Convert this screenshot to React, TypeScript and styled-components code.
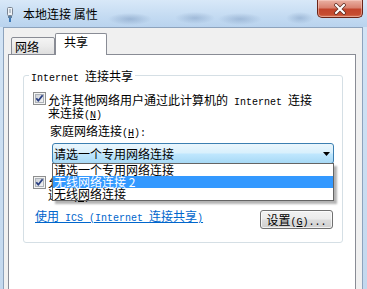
import React from 'react';
import styled, { createGlobalStyle } from 'styled-components';

const CJK = `"Noto Sans CJK SC", "Noto Sans", sans-serif`;

const Global = createGlobalStyle`
  html, body { margin: 0; padding: 0; width: 367px; height: 289px; overflow: hidden; background: #c6daef; }
  #root { width: 367px; height: 289px; }
  * { box-sizing: border-box; }
`;

const Window = styled.div`
  width: 367px;
  height: 289px;
  display: flex;
  flex-direction: column;
  background: linear-gradient(180deg, #d4e5f6 0%, #c3d8ee 100%);
  font-family: ${CJK};
  font-size: 12px;
  color: #000;
  overflow: hidden;
`;

const TitleBar = styled.div`
  height: 27px;
  flex: none;
  display: flex;
  align-items: flex-start;
  background:
    radial-gradient(ellipse 22px 6px at 130px 19px, rgba(110, 140, 180, 0.45), rgba(110, 140, 180, 0) 100%),
    radial-gradient(ellipse 20px 6px at 195px 18px, rgba(110, 140, 180, 0.4), rgba(110, 140, 180, 0) 100%),
    radial-gradient(ellipse 22px 6px at 240px 19px, rgba(110, 140, 180, 0.4), rgba(110, 140, 180, 0) 100%),
    radial-gradient(ellipse 14px 6px at 300px 18px, rgba(110, 140, 180, 0.4), rgba(110, 140, 180, 0) 100%),
    linear-gradient(180deg, #d8e8f8 0%, #c4dbf2 60%, #b9d3ee 100%);
`;

const TitleLeft = styled.div`
  display: flex;
  align-items: flex-start;
  gap: 9px;
  padding: 7px 0 0 6px;
`;

const TitleText = styled.span`
  line-height: 14px;
  font-size: 12px;
  color: #000;
`;

const CloseButton = styled.div`
  margin-left: auto;
  margin-right: 4px;
  width: 46px;
  height: 18px;
  border: 1px solid #6a2417;
  border-top: none;
  border-radius: 0 0 5px 5px;
  background: linear-gradient(180deg, #eab1a3 0%, #d98270 45%, #c2452c 55%, #c64d31 85%, #d77a5d 100%);
  box-shadow: inset 0 0 0 1px rgba(255, 220, 210, 0.45);
  display: flex;
  align-items: center;
  justify-content: center;
`;

const Client = styled.div`
  flex: 1;
  margin: 0 4px 0 3px;
  background: #f0f0f0;
  border: 1px solid #8da3bd;
  border-bottom: none;
  display: flex;
  flex-direction: column;
  padding: 5px 6px 0 4px;
  min-height: 0;
`;

const TabRow = styled.div`
  display: flex;
  align-items: flex-end;
  height: 22px;
  padding-left: 3px;
  margin-bottom: -1px;
  flex: none;
`;

const Tab = styled.div<{ $active?: boolean; $w: number; $pl: number }>`
  width: ${p => p.$w}px;
  height: ${p => (p.$active ? 22 : 18)}px;
  padding-left: ${p => p.$pl}px;
  padding-top: ${p => (p.$active ? 1 : 2)}px;
  line-height: 14px;
  border: 1px solid #898c95;
  border-bottom: ${p => (p.$active ? 'none' : '1px solid #898c95')};
  border-radius: 2px 2px 0 0;
  background: ${p => (p.$active ? '#ffffff' : 'linear-gradient(180deg, #f4f4f4 0%, #ebebeb 50%, #dedede 100%)')};
  position: ${p => (p.$active ? 'relative' : 'static')};
  z-index: ${p => (p.$active ? 1 : 0)};
`;

const Panel = styled.div`
  flex: 1;
  background: #fff;
  border: 1px solid #898c95;
  border-bottom: none;
  padding-left: 14px;
`;

const Group = styled.fieldset`
  margin: 14px 0 0 0;
  width: 320px;
  border: 1px solid #d5dfe5;
  border-radius: 3px;
  padding: 0;
  min-inline-size: 0;
`;

const Legend = styled.legend`
  margin-left: 5px;
  padding: 0 2px;
  line-height: 13px;
  height: 13px;
`;

const M = styled.span`
  font-family: "Liberation Mono", monospace;
  font-size: 10px;
  line-height: 0;
  white-space: pre;
`;

const GroupBody = styled.div`
  display: flex;
  flex-direction: column;
  padding: 11px 9px 13px 9px;
`;

const CheckRow = styled.div<{ $mt: number; $boxTop: number }>`
  display: flex;
  align-items: flex-start;
  margin-top: ${p => p.$mt}px;
  & > svg { margin-top: ${p => p.$boxTop}px; flex: none; }
`;

const CheckText = styled.div`
  margin-left: 2px;
  line-height: 13px;
  white-space: nowrap;
`;

const FieldLabel = styled.div`
  margin: 5px 0 0 17px;
  line-height: 13px;
`;

const Combo = styled.div`
  position: relative;
  margin: 6px 0 0 19px;
  width: 282px;
  height: 21px;
  border: 1px solid #3c7fb1;
  border-radius: 3px;
  background: linear-gradient(180deg, #eaf6fd 0%, #d9f0fc 45%, #bee6fd 55%, #a7d9f5 100%);
  display: flex;
  align-items: center;
  padding-left: 1px;
  padding-right: 3px;
  line-height: 14px;
`;

const ComboText = styled.span`
  flex: 1;
`;

const DropList = styled.div`
  position: absolute;
  left: -1px;
  top: 19px;
  width: 282px;
  background: #fff;
  border: 1px solid #646464;
  box-shadow: 3px 3px 2px rgba(0, 0, 0, 0.3);
  z-index: 5;
`;

const DropItem = styled.div<{ $sel?: boolean }>`
  height: 12px;
  line-height: 12px;
  padding-left: 1px;
  background: ${p => (p.$sel ? '#3399ff' : 'transparent')};
  color: ${p => (p.$sel ? '#fff' : '#000')};
  white-space: nowrap;
`;

const BottomRow = styled.div`
  display: flex;
  align-items: flex-start;
  margin-top: 8px;
  height: 20px;
`;

const Link = styled.a`
  margin-left: 2px;
  line-height: 13px;
  color: #0066cc;
  text-decoration: underline;
  cursor: pointer;
`;

const Button = styled.button`
  margin-left: auto;
  margin-top: 1px;
  width: 73px;
  height: 19px;
  padding: 0;
  border: 1px solid #707070;
  border-radius: 3px;
  background: linear-gradient(180deg, #f2f2f2 0%, #ebebeb 48%, #dddddd 52%, #cfcfcf 100%);
  box-shadow: inset 0 0 0 1px rgba(255, 255, 255, 0.7);
  font-family: ${CJK};
  font-size: 12px;
  line-height: 15px;
  color: #000;
`;

const CheckBox = () => (
  <svg width="13" height="13" viewBox="0 0 13 13">
    <defs>
      <linearGradient id="cbg" x1="0" y1="0" x2="1" y2="1">
        <stop offset="0" stopColor="#cbcfd5" />
        <stop offset="1" stopColor="#f6f6f6" />
      </linearGradient>
    </defs>
    <rect x="0.5" y="0.5" width="12" height="12" fill="#f4f4f4" stroke="#8e8f8f" />
    <rect x="2.5" y="2.5" width="8" height="8" fill="url(#cbg)" stroke="#aeb3b9" />
    <path d="M3.3 6.2 L5.3 8.8 L9.6 3.2" fill="none" stroke="#2a3f82" strokeWidth="1.8" strokeLinejoin="round" />
  </svg>
);

const TitleIcon = () => (
  <svg width="8" height="15" viewBox="0 0 8 15">
    <rect x="1.5" y="0.5" width="5" height="8" rx="1" fill="#eef2f6" stroke="#7a8593" />
    <rect x="3" y="2" width="2" height="4" fill="#b8c2cc" />
    <rect x="2" y="9" width="4" height="2" fill="#5f7f9f" />
    <rect x="3" y="11" width="2" height="4" fill="#3d78b5" />
  </svg>
);

const CloseX = () => (
  <svg width="14" height="12" viewBox="0 0 14 12">
    <path d="M3 2 L11 10 M11 2 L3 10" stroke="#5a2a20" strokeWidth="3.6" strokeLinecap="round" />
    <path d="M3 2 L11 10 M11 2 L3 10" stroke="#ffffff" strokeWidth="2.2" strokeLinecap="round" />
  </svg>
);

const Arrow = () => (
  <svg width="7" height="4" viewBox="0 0 7 4">
    <path d="M0 0 H7 L3.5 4 Z" fill="#000" />
  </svg>
);

export default function App() {
  return (
    <>
      <Global />
      <Window>
        <TitleBar>
          <TitleLeft>
            <TitleIcon />
            <TitleText>本地连接 属性</TitleText>
          </TitleLeft>
          <CloseButton>
            <CloseX />
          </CloseButton>
        </TitleBar>
        <Client>
          <TabRow>
            <Tab $w={44} $pl={3}>网络</Tab>
            <Tab $active $w={52} $pl={8}>共享</Tab>
          </TabRow>
          <Panel>
            <Group>
              <Legend>
                <M>Internet </M>连接共享
              </Legend>
              <GroupBody>
                <CheckRow $mt={0} $boxTop={-1}>
                  <CheckBox />
                  <CheckText>
                    允许其他网络用户通过此计算机的<M> Internet </M>连接
                    <br />
                    来连接<M>(<u>N</u>)</M>
                  </CheckText>
                </CheckRow>
                <FieldLabel>
                  家庭网络连接<M>(<u>H</u>):</M>
                </FieldLabel>
                <Combo>
                  <ComboText>请选一个专用网络连接</ComboText>
                  <Arrow />
                  <DropList>
                    <DropItem>请选一个专用网络连接</DropItem>
                    <DropItem $sel>无线网络连接 2</DropItem>
                    <DropItem>无线网络连接</DropItem>
                  </DropList>
                </Combo>
                <CheckRow $mt={11} $boxTop={1}>
                  <CheckBox />
                  <CheckText>
                    允许其他网络用户控制或禁用共享的<M> Internet</M>
                    <br />
                    连接<M>(<u>O</u>)</M>
                  </CheckText>
                </CheckRow>
                <BottomRow>
                  <Link>
                    使用<M> ICS (Internet </M>连接共享<M>)</M>
                  </Link>
                  <Button>
                    设置<M>(<u>G</u>)...</M>
                  </Button>
                </BottomRow>
              </GroupBody>
            </Group>
          </Panel>
        </Client>
      </Window>
    </>
  );
}
